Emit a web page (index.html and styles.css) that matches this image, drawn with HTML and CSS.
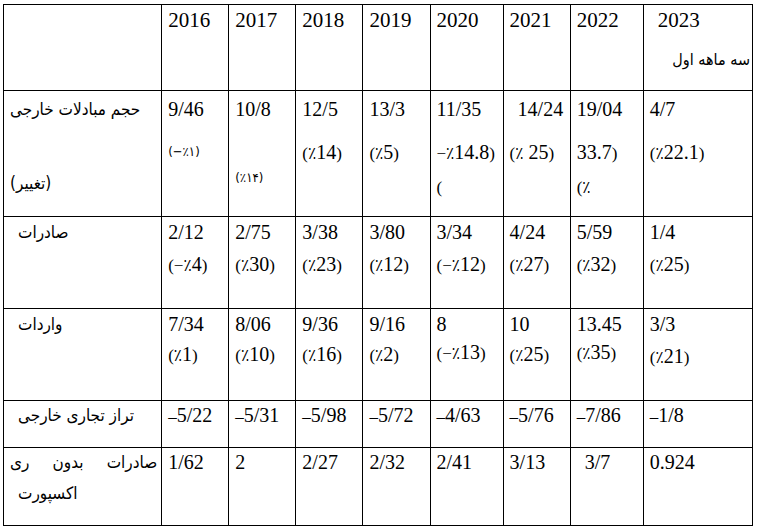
FILE: index.html
```html
<!doctype html>
<html lang="fa">
<head>
  <meta charset="UTF-8"/>
  <meta content="width=device-width, initial-scale=1" name="viewport">
  <title>تراز تجاری</title>
  <link rel="stylesheet" href="styles.css">
</head>
<body>
<table class="trade">
  <colgroup>
    <col class="c-label">
    <col class="c-yr"><col class="c-yr"><col class="c-yr"><col class="c-yr">
    <col class="c-wide"><col class="c-yr"><col class="c-wide"><col class="c-last">
  </colgroup>
  <tr class="row-head">
    <td></td>
    <td><div class="ln yr">2016</div></td>
    <td><div class="ln yr">2017</div></td>
    <td><div class="ln yr">2018</div></td>
    <td><div class="ln yr">2019</div></td>
    <td><div class="ln yr">2020</div></td>
    <td><div class="ln yr">2021</div></td>
    <td><div class="ln yr">2022</div></td>
    <td class="cur">
      <div class="ln yr ind">2023</div>
      <div class="ln fa right" dir="rtl">سه ماهه اول</div>
    </td>
  </tr>
  <tr class="row-volume">
    <td class="label">
      <div class="ln fa">حجم مبادلات خارجی</div>
      <div class="ln fa far">(تغییر)</div>
    </td>
    <td><div class="ln">9/46</div><div class="ln l2 small">(−٪۱)</div></td>
    <td><div class="ln">10/8</div><div class="ln low small">(٪۱۴)</div></td>
    <td><div class="ln">12/5</div><div class="ln l2"><span class="pc">(٪</span>14<span class="pc">)</span></div></td>
    <td><div class="ln">13/3</div><div class="ln l2"><span class="pc">(٪</span>5<span class="pc">)</span></div></td>
    <td><div class="ln">11/35</div><div class="ln l2"><span class="pc">−٪</span>14.8<span class="pc">)</span></div><div class="ln l3"><span class="pc">(</span></div></td>
    <td><div class="ln ind">14/24</div><div class="ln l2"><span class="pc">(٪</span> 25<span class="pc">)</span></div></td>
    <td><div class="ln">19/04</div><div class="ln l2">33.7<span class="pc">)</span></div><div class="ln l3"><span class="pc">(٪</span></div></td>
    <td class="cur"><div class="ln">4/7</div><div class="ln l2"><span class="pc">(٪</span>22.1<span class="pc">)</span></div></td>
  </tr>
  <tr class="row-exp">
    <td class="label"><div class="ln fa ind">صادرات</div></td>
    <td><div class="ln">2/12</div><div class="ln l2"><span class="pc">(−٪</span>4<span class="pc">)</span></div></td>
    <td><div class="ln">2/75</div><div class="ln l2"><span class="pc">(٪</span>30<span class="pc">)</span></div></td>
    <td><div class="ln">3/38</div><div class="ln l2"><span class="pc">(٪</span>23<span class="pc">)</span></div></td>
    <td><div class="ln">3/80</div><div class="ln l2"><span class="pc">(٪</span>12<span class="pc">)</span></div></td>
    <td><div class="ln">3/34</div><div class="ln l2"><span class="pc">(−٪</span>12<span class="pc">)</span></div></td>
    <td><div class="ln">4/24</div><div class="ln l2"><span class="pc">(٪</span>27<span class="pc">)</span></div></td>
    <td><div class="ln">5/59</div><div class="ln l2"><span class="pc">(٪</span>32<span class="pc">)</span></div></td>
    <td class="cur"><div class="ln">1/4</div><div class="ln l2"><span class="pc">(٪</span>25<span class="pc">)</span></div></td>
  </tr>
  <tr class="row-imp">
    <td class="label"><div class="ln fa ind">واردات</div></td>
    <td><div class="ln">7/34</div><div class="ln l2"><span class="pc">(٪</span>1<span class="pc">)</span></div></td>
    <td><div class="ln">8/06</div><div class="ln l2"><span class="pc">(٪</span>10<span class="pc">)</span></div></td>
    <td><div class="ln">9/36</div><div class="ln l2"><span class="pc">(٪</span>16<span class="pc">)</span></div></td>
    <td><div class="ln">9/16</div><div class="ln l2"><span class="pc">(٪</span>2<span class="pc">)</span></div></td>
    <td><div class="ln">8</div><div class="ln l2 up"><span class="pc">(−٪</span>13<span class="pc">)</span></div></td>
    <td><div class="ln">10</div><div class="ln l2"><span class="pc">(٪</span>25<span class="pc">)</span></div></td>
    <td><div class="ln">13.45</div><div class="ln l2 up"><span class="pc">(٪</span>35<span class="pc">)</span></div></td>
    <td class="cur"><div class="ln">3/3</div><div class="ln l2 down"><span class="pc">(٪</span>21<span class="pc">)</span></div></td>
  </tr>
  <tr class="row-bal">
    <td class="label"><div class="ln fa ind">تراز تجاری خارجی</div></td>
    <td><div class="ln"><span class="pc">–</span>5/22</div></td>
    <td><div class="ln"><span class="pc">–</span>5/31</div></td>
    <td><div class="ln"><span class="pc">–</span>5/98</div></td>
    <td><div class="ln"><span class="pc">–</span>5/72</div></td>
    <td><div class="ln"><span class="pc">–</span>4/63</div></td>
    <td><div class="ln"><span class="pc">–</span>5/76</div></td>
    <td><div class="ln"><span class="pc">–</span>7/86</div></td>
    <td class="cur"><div class="ln"><span class="pc">–</span>1/8</div></td>
  </tr>
  <tr class="row-reexp">
    <td class="label">
      <div class="ln fa spread">صادرات بدون ری</div>
      <div class="ln fa l2 ind">اکسپورت</div>
    </td>
    <td><div class="ln">1/62</div></td>
    <td><div class="ln">2</div></td>
    <td><div class="ln">2/27</div></td>
    <td><div class="ln">2/32</div></td>
    <td><div class="ln">2/41</div></td>
    <td><div class="ln">3/13</div></td>
    <td><div class="ln ind">3/7</div></td>
    <td class="cur"><div class="ln">0.924</div></td>
  </tr>
</table>
</body>
</html>
```

FILE: styles.css
```css
* {
  box-sizing: border-box;
}

body {
  margin: 4px 0 0 3px;
  background: #fff;
  color: #000;
  font-family: "Liberation Serif", "DejaVu Sans", serif;
  font-size: 20px;
}

.trade {
  border-collapse: collapse;
  table-layout: fixed;
  width: 750px;
}

.trade td {
  border: 1.5px solid #000;
  vertical-align: top;
  padding: 1px 4px 0 6px;
}

.c-label { width: 158px; }
.c-yr { width: 67px; }
.c-wide { width: 73px; }
.c-last { width: 109px; }

.ln {
  line-height: 28px;
  white-space: nowrap;
}

.yr {
  font-size: 21px;
}

.fa {
  font-family: "DejaVu Sans Condensed", "DejaVu Sans", sans-serif;
  font-stretch: condensed;
  font-size: 17px;
}

.right {
  text-align: right;
}

.ind {
  padding-left: 8px;
}

.cur {
  padding-left: 9px;
}

.pc {
  font-family: "Liberation Serif", "DejaVu Sans Condensed", "DejaVu Sans", serif;
  font-size: 17px;
}

.small {
  font-family: "DejaVu Sans Condensed", "DejaVu Sans", sans-serif;
  font-size: 13px;
}

.label {
  padding-left: 5px;
  padding-right: 2px;
}

.spread {
  text-align: justify;
  text-align-last: justify;
}

/* row heights */
.row-head { height: 86px; }
.row-volume { height: 126px; }
.row-exp { height: 92px; }
.row-imp { height: 92px; }
.row-bal { height: 47px; }
.row-reexp { height: 78px; }

.row-head .fa {
  font-size: 16px;
  margin-top: 12px;
  margin-right: -2px;
}

.row-volume td {
  padding-top: 4px;
}

.row-volume .l2 { margin-top: 15px; }
.row-volume .l3 { margin-top: 4px; }
.row-volume .low { margin-top: 41px; }
.row-volume .far { margin-top: 46px; }

.row-exp .l2 { margin-top: 4px; }
.row-imp .l2 { margin-top: 2px; }
.row-imp .up { margin-top: 0; }
.row-imp .down { margin-top: 4px; }

.row-bal td {
  padding-top: 0;
}

.row-reexp td {
  padding-top: 0;
}

.row-reexp .l2 { margin-top: 3px; }
```
